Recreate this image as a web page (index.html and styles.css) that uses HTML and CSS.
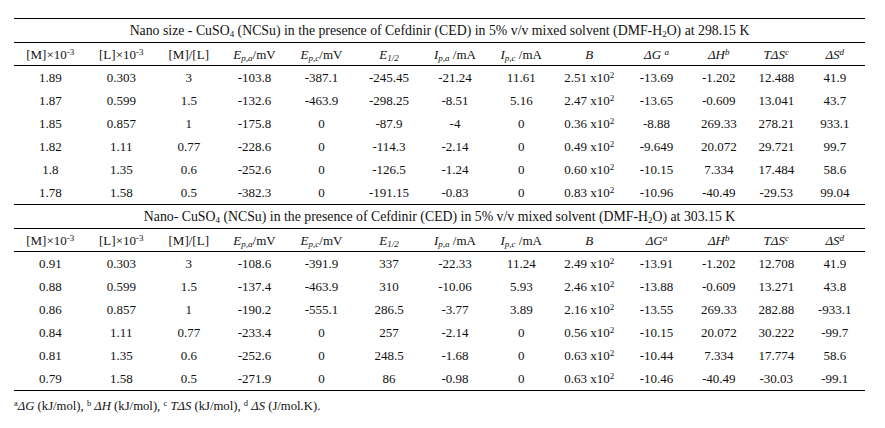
FILE: index.html
```html
<!DOCTYPE html>
<html>
<head>
<meta charset="utf-8">
<link rel="stylesheet" href="styles.css">
</head>
<body>
<div class="page">
<table class="data">
<colgroup>
<col style="width:72.5px"><col style="width:69.5px"><col style="width:65.5px"><col style="width:66px"><col style="width:68px"><col style="width:67px"><col style="width:65px"><col style="width:67.5px"><col style="width:68.5px"><col style="width:66px"><col style="width:58.5px"><col style="width:56.5px"><col style="width:60.5px">
</colgroup>
<tbody>
<tr class="title"><td colspan="13">Nano size - CuSO<sub>4</sub> (NCSu) in the presence of Cefdinir (CED) in 5% v/v mixed solvent (DMF-H<sub>2</sub>O) at 298.15 K</td></tr>
<tr class="head">
<td>[M]×10<sup>-3</sup></td><td>[L]×10<sup>-3</sup></td><td>[M]/[L]</td><td><i>E<sub>p,a</sub></i>/mV</td><td><i>E<sub>p,c</sub></i>/mV</td><td><i>E<sub>1/2</sub></i></td><td><i>I<sub>p,a</sub></i> /mA</td><td><i>I<sub>p,c</sub></i> /mA</td><td><i>B</i></td><td><i>ΔG <sup>a</sup></i></td><td><i>ΔH<sup>b</sup></i></td><td><i>TΔS<sup>c</sup></i></td><td><i>ΔS<sup>d</sup></i></td>
</tr>
<tr><td>1.89</td><td>0.303</td><td>3</td><td>-103.8</td><td>-387.1</td><td>-245.45</td><td>-21.24</td><td>11.61</td><td>2.51 x10<sup>2</sup></td><td>-13.69</td><td>-1.202</td><td>12.488</td><td>41.9</td></tr>
<tr><td>1.87</td><td>0.599</td><td>1.5</td><td>-132.6</td><td>-463.9</td><td>-298.25</td><td>-8.51</td><td>5.16</td><td>2.47 x10<sup>2</sup></td><td>-13.65</td><td>-0.609</td><td>13.041</td><td>43.7</td></tr>
<tr><td>1.85</td><td>0.857</td><td>1</td><td>-175.8</td><td>0</td><td>-87.9</td><td>-4</td><td>0</td><td>0.36 x10<sup>2</sup></td><td>-8.88</td><td>269.33</td><td>278.21</td><td>933.1</td></tr>
<tr><td>1.82</td><td>1.11</td><td>0.77</td><td>-228.6</td><td>0</td><td>-114.3</td><td>-2.14</td><td>0</td><td>0.49 x10<sup>2</sup></td><td>-9.649</td><td>20.072</td><td>29.721</td><td>99.7</td></tr>
<tr><td>1.8</td><td>1.35</td><td>0.6</td><td>-252.6</td><td>0</td><td>-126.5</td><td>-1.24</td><td>0</td><td>0.60 x10<sup>2</sup></td><td>-10.15</td><td>7.334</td><td>17.484</td><td>58.6</td></tr>
<tr class="last"><td>1.78</td><td>1.58</td><td>0.5</td><td>-382.3</td><td>0</td><td>-191.15</td><td>-0.83</td><td>0</td><td>0.83 x10<sup>2</sup></td><td>-10.96</td><td>-40.49</td><td>-29.53</td><td>99.04</td></tr>
</tbody>
<tbody>
<tr class="title"><td colspan="13">Nano- CuSO<sub>4</sub> (NCSu) in the presence of Cefdinir (CED) in 5% v/v mixed solvent (DMF-H<sub>2</sub>O) at 303.15 K</td></tr>
<tr class="head">
<td>[M]×10<sup>-3</sup></td><td>[L]×10<sup>-3</sup></td><td>[M]/[L]</td><td><i>E<sub>p,a</sub></i>/mV</td><td><i>E<sub>p,c</sub></i>/mV</td><td><i>E<sub>1/2</sub></i></td><td><i>I<sub>p,a</sub></i> /mA</td><td><i>I<sub>p,c</sub></i> /mA</td><td><i>B</i></td><td><i>ΔG<sup>a</sup></i></td><td><i>ΔH<sup>b</sup></i></td><td><i>TΔS<sup>c</sup></i></td><td><i>ΔS<sup>d</sup></i></td>
</tr>
<tr><td>0.91</td><td>0.303</td><td>3</td><td>-108.6</td><td>-391.9</td><td>337</td><td>-22.33</td><td>11.24</td><td>2.49 x10<sup>2</sup></td><td>-13.91</td><td>-1.202</td><td>12.708</td><td>41.9</td></tr>
<tr><td>0.88</td><td>0.599</td><td>1.5</td><td>-137.4</td><td>-463.9</td><td>310</td><td>-10.06</td><td>5.93</td><td>2.46 x10<sup>2</sup></td><td>-13.88</td><td>-0.609</td><td>13.271</td><td>43.8</td></tr>
<tr><td>0.86</td><td>0.857</td><td>1</td><td>-190.2</td><td>-555.1</td><td>286.5</td><td>-3.77</td><td>3.89</td><td>2.16 x10<sup>2</sup></td><td>-13.55</td><td>269.33</td><td>282.88</td><td>-933.1</td></tr>
<tr><td>0.84</td><td>1.11</td><td>0.77</td><td>-233.4</td><td>0</td><td>257</td><td>-2.14</td><td>0</td><td>0.56 x10<sup>2</sup></td><td>-10.15</td><td>20.072</td><td>30.222</td><td>-99.7</td></tr>
<tr><td>0.81</td><td>1.35</td><td>0.6</td><td>-252.6</td><td>0</td><td>248.5</td><td>-1.68</td><td>0</td><td>0.63 x10<sup>2</sup></td><td>-10.44</td><td>7.334</td><td>17.774</td><td>58.6</td></tr>
<tr class="last"><td>0.79</td><td>1.58</td><td>0.5</td><td>-271.9</td><td>0</td><td>86</td><td>-0.98</td><td>0</td><td>0.63 x10<sup>2</sup></td><td>-10.46</td><td>-40.49</td><td>-30.03</td><td>-99.1</td></tr>
</tbody>
</table>
<p class="note"><sup>a</sup><i>ΔG</i> (kJ/mol), <sup>b</sup> <i>ΔH</i> (kJ/mol), <sup>c</sup> <i>TΔS</i> (kJ/mol), <sup>d</sup> <i>ΔS</i> (J/mol.K).</p>
</div>
</body>
</html>
```

FILE: styles.css
```css
html, body {
  margin: 0;
  padding: 0;
  background: #fff;
}
body {
  font-family: "Liberation Serif", "Times New Roman", serif;
  font-size: 13px;
  color: #111;
}
.page {
  padding: 18px 20px 0 14px;
}
.data {
  border-collapse: collapse;
  table-layout: fixed;
  width: 851px;
}
.data td {
  padding: 0;
  text-align: center;
  vertical-align: middle;
  white-space: nowrap;
  height: 23px;
  line-height: 15px;
}
.data tr.title td {
  height: 23px;
  font-size: 13.8px;
  border-top: 1px solid #000;
  border-bottom: 1px solid #000;
}
.data tr.head td {
  height: 22px;
  border-bottom: 1px solid #000;
}
.data tr.last td {
  border-bottom: 1px solid #000;
}
sup, sub {
  font-size: 9px;
  line-height: 0;
}
sup {
  vertical-align: 4px;
}
sub {
  vertical-align: -2px;
}
.note {
  margin: 7px 0 0 0;
  font-size: 12.7px;
  line-height: 16px;
}
.note sup {
  font-size: 8.5px;
}
```
